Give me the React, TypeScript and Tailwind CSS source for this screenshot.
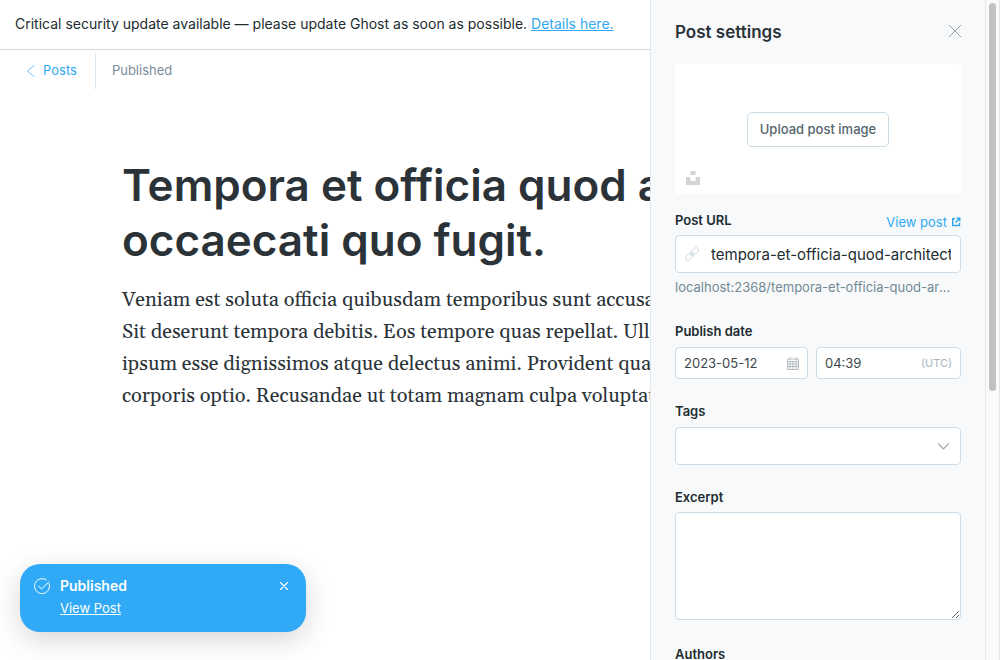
import React, { useState } from "react";

const paragraphLines = [
  "Veniam est soluta officia quibusdam temporibus sunt accusantium.",
  "Sit deserunt tempora debitis. Eos tempore quas repellat. Ullam",
  "ipsum esse dignissimos atque delectus animi. Provident quaerat",
  "corporis optio. Recusandae ut totam magnam culpa voluptatem.",
];

function Banner() {
  return (
    <div className="flex h-[50px] shrink-0 items-center border-b border-[#d5d7d9] px-[15px] pb-[2px] text-sm whitespace-nowrap text-[#222c30]">
      <p>
        Critical security update available — please update Ghost as soon as possible.{" "}
        <a href="#details" className="text-[#30a9f0] underline">
          Details here.
        </a>
      </p>
    </div>
  );
}

function EditorHeader() {
  return (
    <header className="flex h-[42px] shrink-0 items-center pl-[26px] text-[13px]">
      <a href="#posts" className="flex h-9 items-center gap-2 border-r border-[#dae7f0] pr-[18px] text-[#30a9f0]">
        <svg width="9" height="12" viewBox="0 0 9 12" fill="none" stroke="currentColor" strokeWidth="0.7" strokeLinecap="round" strokeLinejoin="round" aria-hidden="true">
          <path d="M8 .5 1.500 6 8 11.500" />
        </svg>
        Posts
      </a>
      <span className="pl-4 text-[#7c8b9a]">Published</span>
    </header>
  );
}

function Toast({ onClose }: { onClose: () => void }) {
  return (
    <div className="absolute bottom-7 left-5 flex h-[68px] w-[286px] items-start rounded-[20px] bg-[#30a9f6] px-3 pt-3 text-white shadow-[0_8px_28px_rgba(0,0,0,0.16)]" role="status">
      <svg className="mt-[2px] ml-[2px] shrink-0" width="16" height="16" viewBox="0 0 16 16" fill="none" stroke="currentColor" strokeWidth="1" strokeLinecap="round" strokeLinejoin="round" aria-hidden="true">
        <path d="M15.200 5.800A7.500 7.500 0 1 1 12.300 1.900" />
        <path d="m4.500 8 3 3L14.800 4" />
      </svg>
      <div className="ml-[10px] flex-1">
        <p className="text-sm font-semibold leading-5">Published</p>
        <a href="#view" className="block text-[13px] leading-6 underline">
          View Post
        </a>
      </div>
      <button type="button" aria-label="Close notification" onClick={onClose} className="p-[6px]">
        <svg width="8" height="8" viewBox="0 0 8 8" stroke="currentColor" strokeWidth="1.1" strokeLinecap="round" aria-hidden="true">
          <path d="m.5.5 7 7M7.500.5l-7 7" />
        </svg>
      </button>
    </div>
  );
}

const label = "block text-[13px] font-semibold leading-5 text-[#222c30]";
const field = "rounded-[4px] border border-[#ccdce6] bg-white";

function Settings() {
  return (
    <aside className="w-[335px] shrink-0 overflow-hidden border-l border-[#dfe8ef] bg-[#f7f9fb] px-6 pt-5">
      <div className="flex h-6 items-start justify-between">
        <h2 className="text-[17px] leading-6 font-semibold text-[#2b3338]">Post settings</h2>
        <button type="button" aria-label="Close settings" className="pt-[5px] text-[#7f8990]">
          <svg width="12" height="12" viewBox="0 0 12 12" stroke="currentColor" strokeWidth="0.8" aria-hidden="true">
            <path d="m0 0 12 12M12 0 0 12" />
          </svg>
        </button>
      </div>

      <div className="relative mt-5 flex h-[130px] items-center justify-center rounded-[4px] bg-white">
        <button type="button" className="h-[35px] rounded-[5px] border border-[#ccdce6] px-3 pt-px text-[13px] font-medium text-[#54666d]">
          Upload post image
        </button>
        <button type="button" aria-label="Choose a stock photo" className="absolute bottom-[9px] left-[11px] text-[#d2d4d6]">
          <svg width="14" height="14" viewBox="0 0 14 14" fill="currentColor" aria-hidden="true">
            <path d="M4.400 0h5.200v4H4.400zM0 6.100h4.400v4h5.200v-4H14V14H0z" />
          </svg>
        </button>
      </div>

      <div className="mt-4 flex h-5 items-center justify-between">
        <label htmlFor="url" className={label}>Post URL</label>
        <a href="#post" className="flex items-center gap-1 pt-[3px] text-[13px] leading-4 text-[#30a9f0]">
          View post
          <svg width="10" height="10" viewBox="0 0 10 10" fill="none" stroke="currentColor" strokeWidth="1.4" aria-hidden="true">
            <path d="M4 1.700H1.700v6.800h6.800V6M5.500 1.200h3.300v3.300M8.800 1.200 4.500 5.500" />
          </svg>
        </a>
      </div>
      <div className={"mt-[5px] flex h-[38px] items-center gap-3 px-[9px] " + field}>
        <svg className="shrink-0 text-[#c4d4de]" width="14" height="14" viewBox="0 0 24 24" fill="none" stroke="currentColor" strokeWidth="1.6" strokeLinecap="round" aria-hidden="true">
          <path d="M8.500 15.500l7-7M11 13a4 4 0 0 1 0-5.700l5-5a4 4 0 0 1 5.700 5.700l-5 5a4 4 0 0 1-4.700.7M13 11a4 4 0 0 1 0 5.700l-5 5A4 4 0 0 1 2.300 16l5-5a4 4 0 0 1 4.700-.7" />
        </svg>
        <input id="url" defaultValue="tempora-et-officia-quod-architecto-occaecati-quo-fugit" className="w-full min-w-0 bg-transparent pt-[2px] text-[15px] text-[#222c30] outline-none" />
      </div>
      <p className="mt-1 truncate pr-1 text-[13px] leading-5 text-[#738a94]">localhost:2368/tempora-et-officia-quod-architecto-occaecati-quo-fugit/</p>

      <label htmlFor="date" className={"mt-6 " + label}>Publish date</label>
      <div className="mt-[6px] flex gap-2 text-[13px] text-[#3b474d]">
        <div className={"flex h-8 w-[133px] items-center px-2 " + field}>
          <input id="date" defaultValue="2023-05-12" className="w-full min-w-0 bg-transparent pt-px outline-none" />
          <svg className="shrink-0 text-[#a3b0b8]" width="12" height="13" viewBox="0 0 12 13" fill="none" stroke="currentColor" strokeWidth="0.8" aria-hidden="true">
            <path d="M.5 2h11v10.500H.5zM.5 4.500h11M3 0v3M9 0v3M.5 7h11M.5 9.500h11M3 4.500v8M6 4.500v8M9 4.500v8" />
          </svg>
        </div>
        <div className={"flex h-8 flex-1 items-center px-2 " + field}>
          <input aria-label="Publish time" defaultValue="04:39" className="w-full min-w-0 bg-transparent pt-px outline-none" />
          <span className="text-[11px] text-[#abb4be]">(UTC)</span>
        </div>
      </div>

      <label htmlFor="tags" className={"mt-[22px] " + label}>Tags</label>
      <div className="mt-[6px] grid items-center">
        <select id="tags" className={"col-start-1 row-start-1 h-[38px] w-full appearance-none px-3 " + field}>
          <option value=""></option>
        </select>
        <svg className="pointer-events-none col-start-1 row-start-1 mr-3 justify-self-end text-[#95a5ae]" width="11" height="7" viewBox="0 0 11 7" fill="none" stroke="currentColor" strokeWidth="1.200" strokeLinecap="round" strokeLinejoin="round" aria-hidden="true">
          <path d="m.5.8 5 5 5-5" />
        </svg>
      </div>

      <label htmlFor="excerpt" className={"mt-[22px] " + label}>Excerpt</label>
      <textarea id="excerpt" className={"mt-[5px] block h-[108px] w-full resize px-3 py-2 outline-none " + field} />

      <label htmlFor="authors" className={"mt-6 " + label}>Authors</label>
      <input id="authors" className={"mt-[6px] h-[38px] w-full px-3 " + field} />
    </aside>
  );
}

export default function App() {
  const [toast, setToast] = useState(true);
  return (
    <div className="flex h-screen overflow-hidden bg-white font-['Inter',sans-serif]">
      <main className="relative flex min-w-0 flex-1 flex-col overflow-hidden">
        <Banner />
        <EditorHeader />
        <article className="ml-[122px] w-[755px] pt-[66px] text-[#2b3338]">
          <h1 className="text-[44px] leading-[55px] font-semibold">
            Tempora et officia quod architecto occaecati quo fugit.
          </h1>
          <p className="mt-4 font-['Gelasio','Georgia','Liberation_Serif',serif] text-xl leading-8 whitespace-nowrap">
            {paragraphLines.map((line) => (
              <span key={line} className="block">{line}</span>
            ))}
          </p>
        </article>
        {toast && <Toast onClose={() => setToast(false)} />}
      </main>
      <Settings />
      <div className="w-[15px] shrink-0 border-x border-[#e5e6e7] bg-[#fafafa] px-[3px] pt-[3px]" aria-hidden="true">
        <div className="h-[388px] rounded-full bg-[#c1c1c1]" />
      </div>
    </div>
  );
}
